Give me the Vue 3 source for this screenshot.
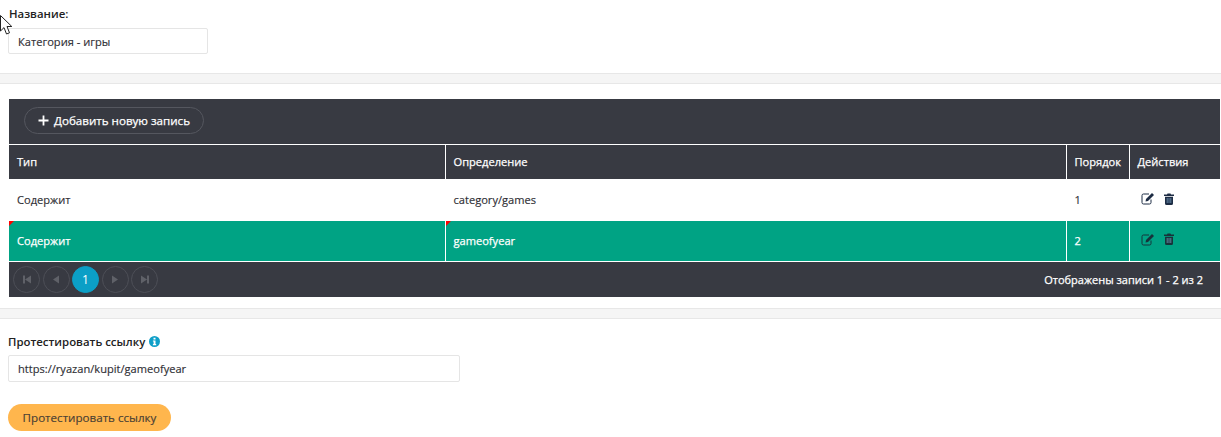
<script setup>
const rows = [
  { type: 'Содержит', def: 'category/games', order: 1, active: false },
  { type: 'Содержит', def: 'gameofyear', order: 2, active: true },
]
</script>

<template>
  <div class="page">
    <svg class="cursor" width="13" height="21" viewBox="0 0 13 21">
      <path d="M0.5 0.5V16L4 12.600L6.500 19L9.500 17.800L7 11.500H11.800Z" fill="#fff" stroke="#222" stroke-width="1" />
    </svg>
    <section class="name-block">
      <label class="label">Название:</label>
      <div class="input name-input">Категория - игры</div>
    </section>
    <div class="band"></div>
    <section class="table-wrap">
      <div class="toolbar">
        <button class="add-btn">
          <svg width="11" height="11" viewBox="0 0 11 11"><path d="M4.600 0.500h1.800v4.100h4.100v1.800H6.400v4.100H4.600V6.400H0.500V4.600h4.100z" fill="#fff" /></svg>
          Добавить новую запись
        </button>
      </div>
      <table class="grid">
        <colgroup>
          <col class="c1" /><col class="c2" /><col class="c3" /><col />
        </colgroup>
        <thead>
          <tr><th>Тип</th><th>Определение</th><th>Порядок</th><th>Действия</th></tr>
        </thead>
        <tbody>
          <tr v-for="(r, i) in rows" :key="i" :class="{ active: r.active, first: i === 0 }">
            <td><span v-if="r.active" class="flag"></span>{{ r.type }}</td>
            <td><span v-if="r.active" class="flag"></span>{{ r.def }}</td>
            <td>{{ r.order }}</td>
            <td>
              <div class="acts">
                <svg class="ico" width="14" height="13" viewBox="0 0 14 13">
                  <path d="M10 7.500V10.500a1.500 1.500 0 0 1-1.500 1.500h-6A1.500 1.500 0 0 1 1 10.500v-7A1.500 1.500 0 0 1 2.500 2H8" fill="none" stroke="currentColor" stroke-width="1" />
                  <path d="M5 7L11 1l2 2-6 6-2.500.5z" fill="currentColor" />
                </svg>
                <svg class="ico trash" width="10" height="12" viewBox="0 0 10 12">
                  <path d="M3.500 0.500h3l.5 1h3V3H0V1.500h3zM1 3.800h8V10.500A1.500 1.500 0 0 1 7.500 12h-5A1.500 1.500 0 0 1 1 10.500z" fill="currentColor" />
                  <path d="M3.200 5v5M5 5v5M6.800 5v5" stroke="#7fa7c9" stroke-width=".7" />
                </svg>
              </div>
            </td>
          </tr>
        </tbody>
      </table>
      <div class="pager">
        <div class="pages">
          <span class="pg"><svg width="10" height="9" viewBox="0 0 10 9"><path d="M1 .5h2v8H1zM9 .5v8L3 4.500z" /></svg></span>
          <span class="pg"><svg width="8" height="9" viewBox="0 0 8 9"><path d="M7 .5v8L1 4.500z" /></svg></span>
          <span class="pg cur">1</span>
          <span class="pg"><svg width="8" height="9" viewBox="0 0 8 9"><path d="M1 .5v8l6-4z" /></svg></span>
          <span class="pg"><svg width="10" height="9" viewBox="0 0 10 9"><path d="M7 .5h2v8H7zM1 .5v8l6-4z" /></svg></span>
        </div>
        <div class="info">Отображены записи 1 - 2 из 2</div>
      </div>
    </section>
    <div class="band"></div>
    <section class="test-block">
      <label class="label test-label">Протестировать ссылку
        <svg class="info-ico" width="11" height="11" viewBox="0 0 11 11">
          <circle cx="5.500" cy="5.500" r="5.500" fill="#0f9fc8" />
          <path d="M4.500 1.800h2v1.700h-2zM3.900 4.400h2.600v3.700h.7v1.200H3.900V8.100h.7V5.600h-.7z" fill="#fff" />
        </svg>
      </label>
      <div class="input test-input">https://ryazan/kupit/gameofyear</div>
      <button class="test-btn">Протестировать ссылку</button>
    </section>
  </div>
</template>

<style>
html, body { background: #fff; margin: 0; }
</style>

<style scoped>
.page {
  position: relative;
  width: 1221px;
  height: 437px;
  overflow: hidden;
  font-family: "Open Sans", "Noto Sans", sans-serif;
  font-size: 11.1px;
  color: #333;
  background: #fff;
}
.cursor { position: absolute; left: 0; top: 15px; }
.name-block { padding: 6px 8px 19px; height: 48px; }
.label { display: block; font-weight: 600; font-size: 11.4px; line-height: 16px; color: #222; margin-left: 1px; }
.input {
  box-sizing: border-box;
  border: 1px solid #e5e5e5;
  border-radius: 2px;
  background: #fff;
  padding: 0 9px;
  display: flex;
  align-items: center;
  color: #2f2f35;
  -webkit-text-stroke: .15px currentColor;
}
.name-input { width: 200px; height: 26px; margin-top: 6px; }
.band {
  box-sizing: border-box;
  height: 11px;
  background: #f5f5f5;
  border-top: 1px solid #e7e7e7;
  border-bottom: 1px solid #e7e7e7;
}
.table-wrap { margin: 15px 1px 11px 9px; background: #383a42; }
.toolbar { display: flex; align-items: center; padding: 0 0 2px 15px; box-sizing: border-box; height: 46px; border-bottom: 1px solid #fff; }
.add-btn {
  height: 27px;
  width: 180px;
  box-sizing: border-box;
  border: 1px solid #55575f;
  border-radius: 14px;
  background: transparent;
  color: #fff;
  font: 400 11.6px "Open Sans", sans-serif;
  -webkit-text-stroke: .25px #fff;
  display: flex;
  align-items: center;
  justify-content: center;
  gap: 5px;
  padding: 0;
}
.grid { width: 100%; border-collapse: collapse; table-layout: fixed; }
.c1 { width: 436px; }
.c2 { width: 621px; }
.c3 { width: 63px; }
th {
  height: 34px;
  padding: 0 8px 2px;
  box-sizing: border-box;
  background: #383a42;
  color: #fff;
  font-weight: 400;
  font-size: 11.1px;
  -webkit-text-stroke: .25px #fff;
  text-align: left;
  border-left: 1px solid #fff;
}
th:first-child, td:first-child { border-left: 0; }
td {
  position: relative;
  box-sizing: border-box;
  padding: 0 8px 2px;
  height: 40px;
  color: #2f2f35;
  background: #fff;
  border-left: 1px solid #fff;
  -webkit-text-stroke: .15px currentColor;
}
tr.first td { height: 42px; }
tr.active td { background: #00a384; color: #fff; height: 40px; padding-bottom: 0; border-bottom: 1px solid #fff; -webkit-text-stroke: .25px #fff; }
.flag {
  position: absolute;
  left: 0;
  top: 0;
  width: 0;
  height: 0;
  border-top: 5px solid #f00;
  border-right: 5px solid transparent;
}
.acts { display: flex; align-items: center; gap: 9px; padding-left: 3px; margin-top: -1px; color: #1d2c44; }
tr.active .acts { color: #17333a; margin-top: -3px; }
.pager { height: 35px; display: flex; align-items: center; justify-content: space-between; padding: 0 17px 0 4px; }
.pages { display: flex; gap: 2.5px; }
.pg {
  box-sizing: border-box;
  width: 27px;
  height: 27px;
  border: 1px solid #4d4f57;
  border-radius: 50%;
  display: flex;
  align-items: center;
  justify-content: center;
  fill: #5f6168;
}
.pg.cur { background: #0b9fc6; border-color: #0b9fc6; color: #fff; font-size: 12px; }
.info { color: #fff; font-size: 11px; -webkit-text-stroke: .25px #fff; }
.test-block { padding: 15px 8px 0; }
.test-label { margin-left: 0; display: flex; align-items: center; gap: 4px; }
.test-input { width: 452px; height: 27px; margin-top: 5px; }
.test-btn {
  display: block;
  margin-top: 22px;
  width: 163px;
  height: 27px;
  border: 0;
  border-radius: 14px;
  background: #ffb64d;
  color: #4a4034;
  font: 11.6px "Open Sans", sans-serif;
  -webkit-text-stroke: .15px currentColor;
  padding: 0;
}
</style>
